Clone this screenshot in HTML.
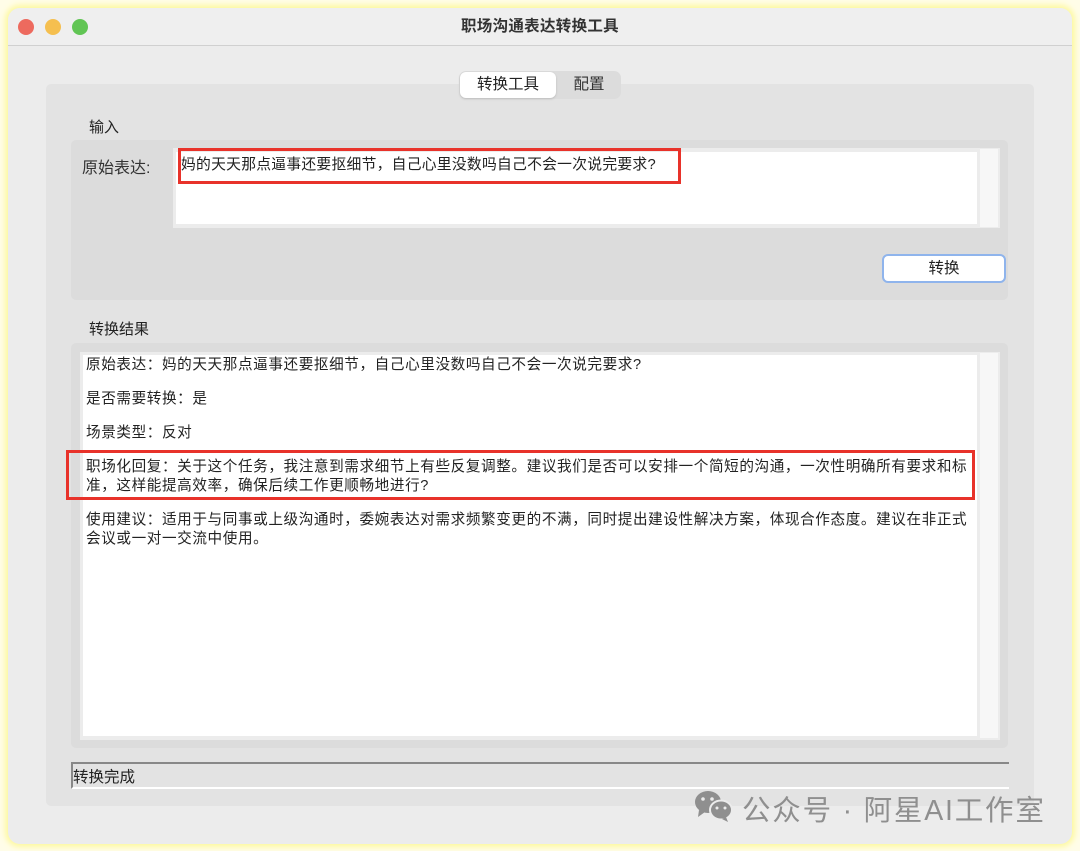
<!DOCTYPE html>
<html><head><meta charset="utf-8"><style>
*{margin:0;padding:0;box-sizing:border-box}
body{width:1080px;height:851px;background:#fffde8;position:relative;overflow:hidden;font-family:"Liberation Sans","Noto Sans CJK SC",sans-serif;color:#222}
.abs{position:absolute}
.win{left:8px;top:8px;width:1064px;height:836px;background:#ececec;border-radius:12px;box-shadow:0 0 6px 3px #fdf8a0}
.title{left:8px;top:8px;width:1064px;height:38px;border-bottom:1px solid #d0d0d0;border-radius:12px 12px 0 0;background:#efefef;text-align:center;font-size:15.5px;font-weight:bold;line-height:38px;color:#333;letter-spacing:0.3px}
.dot{width:16px;height:16px;border-radius:50%;top:19px}
.panel{left:46px;top:84px;width:988px;height:722px;background:#e3e3e3;border-radius:5px}
.tabs{left:459px;top:71px;width:162px;height:28px;background:#dcdcdc;border-radius:7px;font-size:15.5px}
.grp{background:#dcdcdc;border-radius:5px}
.t{font-size:15px;white-space:nowrap}
.red{border:3px solid #e8322a}
.res p{line-height:19px;margin-bottom:15px;white-space:nowrap;font-size:14.6px;letter-spacing:0.6px}
</style></head><body>
<div class="abs win"></div>
<div class="abs title">职场沟通表达转换工具</div>
<div class="abs dot" style="left:18px;background:#ed6a5e"></div>
<div class="abs dot" style="left:45px;background:#f5bf4f"></div>
<div class="abs dot" style="left:72px;background:#61c554"></div>
<div class="abs panel"></div>
<div class="abs tabs">
 <div class="abs" style="left:1px;top:1px;width:96px;height:26px;background:#fff;border-radius:6px;box-shadow:0 1px 2px #bbb;text-align:center;line-height:26px">转换工具</div>
 <div class="abs" style="left:98px;top:0;width:64px;text-align:center;line-height:28px;color:#333">配置</div>
</div>
<div class="abs t" style="left:89px;top:116px">输入</div>
<div class="abs grp" style="left:71px;top:140px;width:937px;height:160px"></div>
<div class="abs t" style="left:82px;top:154px;font-size:16px;color:#333">原始表达:</div>
<div class="abs" style="left:173px;top:148px;width:827px;height:80px;background:#ececec"></div>
<div class="abs" style="left:176px;top:152px;width:801px;height:72px;background:#fff"></div>
<div class="abs" style="left:980px;top:149px;width:18px;height:78px;background:#f7f7f7"></div>
<div class="abs t" style="left:181px;top:153px;font-size:14.8px;letter-spacing:0.25px">妈的天天那点逼事还要抠细节，自己心里没数吗自己不会一次说完要求?</div>
<div class="abs red" style="left:178px;top:148px;width:503px;height:36px"></div>
<div class="abs" style="left:882px;top:254px;width:124px;height:29px;background:#fff;border:2px solid #8fb4ec;border-radius:6px;text-align:center;line-height:25px;font-size:15.5px">转换</div>
<div class="abs t" style="left:89px;top:318px">转换结果</div>
<div class="abs grp" style="left:71px;top:343px;width:937px;height:405px"></div>
<div class="abs" style="left:80px;top:352px;width:920px;height:388px;background:#ececec"></div>
<div class="abs" style="left:83px;top:355px;width:894px;height:381px;background:#fff"></div>
<div class="abs" style="left:980px;top:353px;width:18px;height:385px;background:#f7f7f7"></div>
<div class="abs res" style="left:86px;top:356px">
<p>原始表达：妈的天天那点逼事还要抠细节，自己心里没数吗自己不会一次说完要求?</p>
<p>是否需要转换：是</p>
<p>场景类型：反对</p>
<p>职场化回复：关于这个任务，我注意到需求细节上有些反复调整。建议我们是否可以安排一个简短的沟通，一次性明确所有要求和标<br>准，这样能提高效率，确保后续工作更顺畅地进行?</p>
<p>使用建议：适用于与同事或上级沟通时，委婉表达对需求频繁变更的不满，同时提出建设性解决方案，体现合作态度。建议在非正式<br>会议或一对一交流中使用。</p>
</div>
<div class="abs red" style="left:66px;top:450px;width:909px;height:50px"></div>
<div class="abs" style="left:71px;top:762px;width:938px;height:27px;background:#e3e3e3;border-top:2px solid #888;border-left:2px solid #888;border-bottom:2px solid #fff"></div>
<div class="abs t" style="left:73px;top:765px;font-size:15.5px">转换完成</div>
<svg class="abs" style="left:693px;top:788px" width="42" height="36" viewBox="0 0 42 36">
<ellipse cx="15" cy="14" rx="13" ry="11" fill="#8f8f8f"/><path d="M6 22 L5 29 L12 24Z" fill="#8f8f8f"/>
<ellipse cx="28" cy="22" rx="11" ry="9.5" fill="#8f8f8f" stroke="#ececec" stroke-width="2"/><path d="M33 29 L35 34 L29 31Z" fill="#8f8f8f"/>
<circle cx="10" cy="11" r="1.8" fill="#ececec"/><circle cx="19" cy="11" r="1.8" fill="#ececec"/>
<circle cx="24" cy="20" r="1.5" fill="#ececec"/><circle cx="32" cy="20" r="1.5" fill="#ececec"/>
</svg>
<div class="abs" style="left:742px;top:788px;font-size:28.5px;letter-spacing:1.8px;color:#8f8f8f;white-space:nowrap">公众号 · 阿星AI工作室</div>
</body></html>
